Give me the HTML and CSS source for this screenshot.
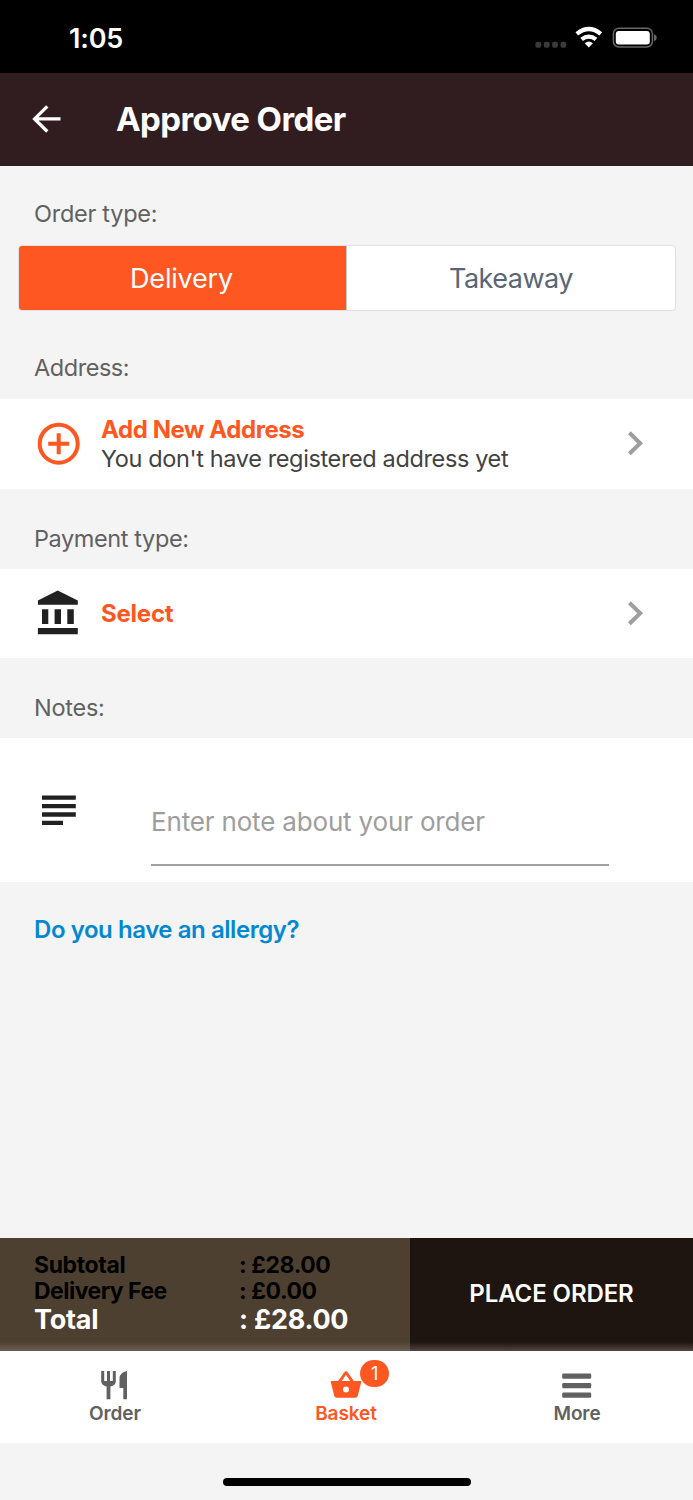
FILE: index.html
```html
<!DOCTYPE html>
<html lang="en">
<head>
<meta charset="utf-8">
<title>Approve Order</title>
<link rel="stylesheet" href="styles.css">
</head>
<body>
<div class="screen">
  <div class="status">
    <span class="time">1:05</span>
    <svg class="status-icons" width="124" height="24" viewBox="0 0 124 24">
      <g fill="#3a3a3a"><rect x="2.400" y="15.800" width="5.800" height="6" rx="2"/><rect x="10.800" y="15.800" width="5.800" height="6" rx="2"/><rect x="19.100" y="15.800" width="5.800" height="6" rx="2"/><rect x="27.500" y="15.800" width="5.800" height="6" rx="2"/></g>
      <g fill="none" stroke="#fff" stroke-width="4.200"><path d="M43.800 7.900Q55.800 -1.900 67.800 7.900"/><path d="M48.600 13.400Q55.800 7.800 63 13.400"/></g>
      <path fill="#fff" d="M51.700 17.200Q55.800 14 59.900 17.200L55.800 21.500Z"/>
      <rect x="80.400" y="2.200" width="39" height="18.800" rx="5.500" fill="none" stroke="#666" stroke-width="1.500"/>
      <rect x="82.800" y="4.900" width="34" height="13.700" rx="3" fill="#fff"/>
      <path fill="#666" d="M121 8.300Q123.800 9.300 123.800 11.600T121 15.200Z"/>
    </svg>
  </div>
  <header class="header">
    <svg class="back" width="30" height="30" viewBox="0 0 30 30" fill="none" stroke="#fff" stroke-width="3.300"><path d="M28.500 14.900H2.800M15.300 2.300L2.600 14.900L15.300 27.500"/></svg>
    <h1 class="title"><span>Approve Order</span></h1>
  </header>
  <main class="content">
    <div class="label label-type"><span class="t-type">Order type:</span></div>
    <div class="segment">
      <div class="option active"><span>Delivery</span></div>
      <div class="option takeaway"><span>Takeaway</span></div>
    </div>
    <div class="label label-address"><span class="t-address">Address:</span></div>
    <section class="row row-address">
      <svg width="44" height="44" viewBox="0 0 44 44" fill="none" stroke="#ff5722" stroke-width="4"><circle cx="21.700" cy="21.700" r="19"/><path d="M21.700 11.200V32.200M11.200 21.700H32.200"/></svg>
      <div class="row-text"><span class="strong t-add">Add New Address</span><span class="sub">You don't have registered address yet</span></div>
      <svg width="16" height="26" viewBox="0 0 16 26" fill="none" stroke="#9e9e9e" stroke-width="4"><path d="M1.400 1.800L12.200 12.300L1.400 22.800"/></svg>
    </section>
    <div class="label label-payment"><span class="t-payment">Payment type:</span></div>
    <section class="row row-payment">
      <svg width="44" height="46" viewBox="0 0 44 46" fill="#212121"><path d="M.9 13.800V9.500L20.700 -.5L40.800 9.500V13.800ZM5 18.200H11.300V33H5ZM17.600 18.200H24V33H17.600ZM30.300 18.200H36.800V33H30.300ZM.9 37H40.800V43.200H.9Z"/></svg>
      <div class="row-text"><span class="strong t-select">Select</span></div>
      <svg width="16" height="26" viewBox="0 0 16 26" fill="none" stroke="#9e9e9e" stroke-width="4"><path d="M1.400 1.800L12.200 12.300L1.400 22.800"/></svg>
    </section>
    <div class="label label-notes"><span class="t-notes">Notes:</span></div>
    <section class="notes">
      <svg width="36" height="30" viewBox="0 0 36 30" fill="#212121"><path d="M1 .4H34.800V4.800H1ZM1 9H34.800V13.300H1ZM1 17.200H34.800V21.800H1ZM1 25.700H22V30H1Z"/></svg>
      <div class="field"><span>Enter note about your order</span></div>
    </section>
    <div class="allergy"><span>Do you have an allergy?</span></div>
  </main>
  <section class="checkout">
    <div class="totals">
      <div class="line"><span class="name t-sub">Subtotal</span><span class="amt">: £28.00</span></div>
      <div class="line"><span class="name t-fee">Delivery Fee</span><span class="amt">: £0.00</span></div>
      <div class="line total"><span class="name">Total</span><span class="amt">: £28.00</span></div>
    </div>
    <div class="place"><span>PLACE ORDER</span></div>
  </section>
  <nav class="tabs">
    <div class="tab">
      <svg width="32" height="30" viewBox="0 0 32 30" fill="#616161"><path d="M2.200 1H5.200V11H8V1H11V11H13.800V1H16.800V11.500Q16.500 15.500 11.400 16.500V29.300H7.600V16.500Q2.500 15.500 2.200 11.500ZM28 1V29.300H24.300V18H20.500V8Q21 2.500 28 1Z"/></svg>
      <span>Order</span>
    </div>
    <div class="tab selected">
      <svg width="32" height="30" viewBox="0 0 32 30"><path fill="#ff5722" fill-rule="evenodd" d="M1.500 11H8.200L14.500 2.100Q16 .3 17.500 2.100L23.800 11H30.500Q31.500 11 31.200 12.200L27.700 26Q27.200 27.800 25.300 27.800H6.700Q4.800 27.800 4.300 26L.8 12.200Q.5 11 1.500 11ZM11.700 11H20.300L16 4.800ZM16 16.500A3 3 0 1 0 16 22.500A3 3 0 1 0 16 16.500Z"/></svg>
      <span>Basket</span>
      <span class="badge">1</span>
    </div>
    <div class="tab">
      <svg width="32" height="30" viewBox="0 0 32 30" fill="#616161"><rect x="1.200" y="3.500" width="29" height="5.300" rx="1.200"/><rect x="1.200" y="13" width="29" height="5.300" rx="1.200"/><rect x="1.200" y="22.500" width="29" height="5.300" rx="1.200"/></svg>
      <span>More</span>
    </div>
  </nav>
  <footer class="home"><div class="home-bar"></div></footer>
</div>
</body>
</html>
```
FILE: styles.css
```css
* { box-sizing: border-box; }
body { margin: 0; background: #f4f4f4; font-family: Inter, "Liberation Sans", sans-serif; }
svg { display: block; flex: none; overflow: visible; }
span { white-space: nowrap; }
.screen { width: 693px; height: 1500px; display: flex; flex-direction: column; overflow: hidden; }

.status { height: 73px; background: #000; display: flex; justify-content: space-between; align-items: flex-start; padding: 23px 36px 0 69px; flex: none; }
.time { color: #fff; font-size: 27px; line-height: 32px; font-weight: 600; letter-spacing: -.2px; }
.status-icons { margin-top: 3px; }

.header { height: 93px; background: #311d20; display: flex; align-items: center; padding: 0 32px 2px; gap: 54px; flex: none; }
.title { margin: 0; color: #fff; font-size: 33px; line-height: 40px; font-weight: 700; letter-spacing: -.57px; }

.content { flex: 1; display: flex; flex-direction: column; }
.label { padding-left: 34px; color: #616161; font-size: 23.5px; line-height: 30px; flex: none; }
.t-type { letter-spacing: -.27px; }
.t-address { letter-spacing: -.45px; }
.t-payment { letter-spacing: -.4px; }
.t-notes { letter-spacing: -.25px; }
.label-type { height: 79px; padding-top: 33px; }
.segment { height: 66px; margin: 0 17px 0 18px; display: flex; border: 1px solid #e0e0e0; border-radius: 4px; overflow: hidden; background: #fff; flex: none; }
.option { width: 328px; display: flex; align-items: center; justify-content: center; color: #5a6675; font-size: 27px; letter-spacing: -.2px; }
.active { background: #ff5722; color: #fff; border-right: 1px solid #bfc5cb; padding-right: 2px; }
.takeaway { letter-spacing: -.5px; }
.label-address { height: 88px; padding-top: 42px; }
.row { display: flex; align-items: center; background: #fff; padding: 0 49px 0 37px; flex: none; }
.row-address { height: 90px; }
.row-text { margin-left: 20px; flex: 1; display: flex; flex-direction: column; font-size: 24px; line-height: 29px; }
.strong { color: #ff5722; font-weight: 700; }
.t-add { letter-spacing: -.42px; }
.t-select { letter-spacing: -.22px; }
.sub { color: #424242; font-size: 23.5px; letter-spacing: -.37px; }
.label-payment { height: 80px; padding-top: 35px; }
.row-payment { height: 89px; }
.label-notes { height: 80px; padding-top: 35px; }
.notes { height: 144px; background: #fff; display: flex; align-items: center; padding: 0 84px 0 41px; flex: none; }
.field { flex: 1; height: 66px; margin: 0 0 16px 74px; padding-top: 2px; border-bottom: 2px solid #a0a0a0; color: #9e9e9e; font-size: 26px; line-height: 40px; letter-spacing: -.17px; align-self: flex-end; }
.allergy { padding: 33px 34px 0; color: #0288d1; font-size: 24px; line-height: 30px; font-weight: 600; letter-spacing: -.44px; }

.checkout { height: 113px; display: flex; flex: none; position: relative; }
.checkout::after { content: ""; position: absolute; left: 0; right: 0; bottom: 0; height: 9px; background: linear-gradient(transparent, rgba(150, 130, 120, .45)); }
.totals { width: 410px; background: #4e4031; padding: 14px 0 0 34px; color: #000; font-weight: 700; }
.line { display: flex; font-size: 23px; line-height: 26px; letter-spacing: -.43px; }
.name { width: 205px; }
.t-sub { letter-spacing: -.38px; }
.t-fee { letter-spacing: -.53px; }
.total { color: #fff; font-size: 27px; line-height: 32px; letter-spacing: -.25px; }
.place { flex: 1; background: #1e1410; color: #fff; display: flex; align-items: center; justify-content: center; padding-bottom: 3px; font-size: 24px; font-weight: 600; letter-spacing: -.1px; }

.tabs { height: 92px; display: grid; grid-template-columns: repeat(3, 1fr); background: #fff; flex: none; }
.tab { display: flex; flex-direction: column; align-items: center; gap: 2px; padding: 19px 1px 0 0; position: relative; color: #616161; font-size: 19px; line-height: 24px; font-weight: 600; letter-spacing: -.1px; }
.selected { color: #ff5722; }
.badge { position: absolute; left: 129px; top: 9px; width: 29px; height: 27px; border-radius: 14px; background: #ff5722; color: #fff; font-size: 18px; font-weight: 400; line-height: 27px; text-align: center; }
.home { height: 57px; padding-top: 35px; flex: none; }
.home-bar { width: 248px; height: 8px; border-radius: 4px; background: #000; margin: 0 auto; }
```
